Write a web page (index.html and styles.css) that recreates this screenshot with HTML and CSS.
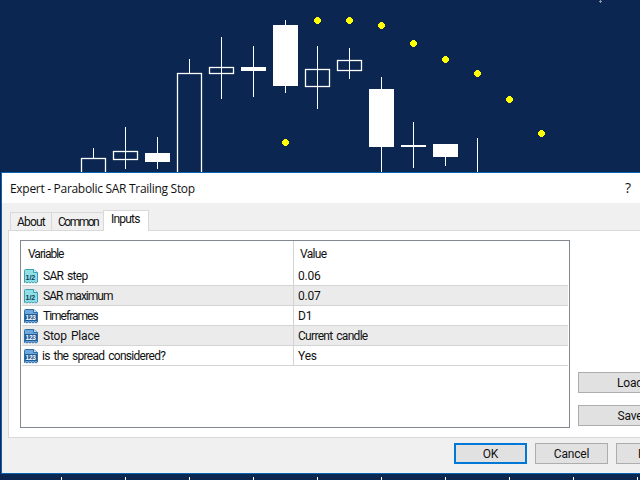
FILE: index.html
```html
<!DOCTYPE html>
<html lang="en">
<head>
	<meta charset="UTF-8">
	<title>Expert - Parabolic SAR Trailing Stop</title>
	<link rel="stylesheet" href="styles.css">
</head>
<body>
	<svg class="chart" width="640" height="480" viewBox="0 0 640 480" shape-rendering="crispEdges">
		<defs>
			<symbol id="dot" viewBox="0 0 7 7" overflow="visible"><path d="M2 0h3v1h1v1h1v3h-1v1h-1v1h-3v-1h-1v-1h-1v-3h1v-1h1z" fill="#ff0"/></symbol>
			<symbol id="icon-double" viewBox="0 0 16 16">
				<path d="M1.500 2.500a1 1 0 0 1 1-1h8l4 3v9.500l-1.500 1-1.500-1-1.500 1-1.500-1-1.500 1-1.500-1-1.500 1-1.500-1-1 .500z" fill="#8fdfe3" stroke="#3f9fb5"/>
				<path d="M10.500 1.500v3h4" fill="#d8f6f6" stroke="#3f9fb5"/>
			</symbol>
			<symbol id="icon-int" viewBox="0 0 16 16">
				<path d="M1.500 2.500a1 1 0 0 1 1-1h8l4 3v9.500l-1.500 1-1.500-1-1.500 1-1.500-1-1.500 1-1.500-1-1.500 1-1.500-1-1 .500z" fill="#6fa8dc" stroke="#2f6fa8"/>
				<path d="M10.500 1.500v3h4" fill="#cfe3f5" stroke="#2f6fa8"/>
				<rect x="2" y="6" width="12" height="7" fill="#1f5a94"/>
			</symbol>
		</defs>
		<!-- wicks -->
		<path class="wick" d="M93.500 148V158M125.500 127V169M157.500 137V169M189.500 59V73M221.500 37V99M253.500 46V97M285.500 20V93M317.500 46V109M349.500 48V79M381.500 77V172M413.500 122V168M445.500 157V166M477.500 138V172"/>
		<!-- hollow bodies -->
		<g class="hollow">
			<rect x="81.500" y="158.500" width="24" height="20"/>
			<rect x="113.500" y="151.500" width="24" height="8"/>
			<rect x="177.500" y="73.500" width="24" height="110"/>
			<rect x="209.500" y="67.500" width="24" height="6"/>
			<rect x="305.500" y="69.500" width="24" height="17"/>
			<rect x="337.500" y="60.500" width="24" height="10"/>
		</g>
		<!-- filled bodies -->
		<g class="filled">
			<rect x="145" y="153" width="25" height="9"/>
			<rect x="241" y="67" width="25" height="4"/>
			<rect x="273" y="25" width="25" height="61"/>
			<rect x="369" y="89" width="25" height="58"/>
			<rect x="401" y="145" width="25" height="2"/>
			<rect x="433" y="144" width="25" height="13"/>
		</g>
		<!-- parabolic sar -->
		<use href="#dot" x="282" y="139" width="7" height="7"/>
		<use href="#dot" x="314" y="17" width="7" height="7"/>
		<use href="#dot" x="346" y="17" width="7" height="7"/>
		<use href="#dot" x="378" y="22" width="7" height="7"/>
		<use href="#dot" x="410" y="40" width="7" height="7"/>
		<use href="#dot" x="442" y="56" width="7" height="7"/>
		<use href="#dot" x="474" y="70" width="7" height="7"/>
		<use href="#dot" x="506" y="96" width="7" height="7"/>
		<use href="#dot" x="538" y="130" width="7" height="7"/>
		<path class="mark" d="M600 0V3M599 1H602"/>
		<!-- time scale ticks -->
		<path class="wick" d="M61.500 477V480M125.500 477V480M189.500 477V480M253.500 477V480M317.500 477V480M381.500 477V480M445.500 477V480M509.500 477V480M573.500 477V480M637.500 477V480"/>
	</svg>

	<div class="dialog">
		<div class="title-bar">
			<span>Expert - Parabolic SAR Trailing Stop</span>
			<span class="help">?</span>
		</div>

		<div class="tabs">
			<div class="tab">About</div>
			<div class="tab">Common</div>
			<div class="tab active">Inputs</div>
		</div>

		<div class="panel">
			<div class="grid">
				<div class="row head">
					<div class="cell name tight">Variable</div>
					<div class="cell value snug">Value</div>
				</div>
				<div class="row">
					<div class="cell name snug"><svg class="icon" viewBox="0 0 16 16"><use href="#icon-double"/><text x="2.500" y="11.500" class="icon-text">1/2</text></svg>SAR step</div>
					<div class="cell value">0.06</div>
				</div>
				<div class="row alt">
					<div class="cell name tight"><svg class="icon" viewBox="0 0 16 16"><use href="#icon-double"/><text x="2.500" y="11.500" class="icon-text">1/2</text></svg>SAR maximum</div>
					<div class="cell value">0.07</div>
				</div>
				<div class="row">
					<div class="cell name tight"><svg class="icon" viewBox="0 0 16 16"><use href="#icon-int"/><text x="2.500" y="12" class="icon-text int">123</text></svg>Timeframes</div>
					<div class="cell value">D1</div>
				</div>
				<div class="row alt">
					<div class="cell name"><svg class="icon" viewBox="0 0 16 16"><use href="#icon-int"/><text x="2.500" y="12" class="icon-text int">123</text></svg>Stop Place</div>
					<div class="cell value snug">Current candle</div>
				</div>
				<div class="row">
					<div class="cell name snug spread"><svg class="icon" viewBox="0 0 16 16"><use href="#icon-int"/><text x="2.500" y="12" class="icon-text int">123</text></svg>is the spread considered?</div>
					<div class="cell value">Yes</div>
				</div>
			</div>
			<div class="side">
				<button class="btn wide">Load</button>
				<button class="btn wide">Save</button>
			</div>
		</div>

		<div class="footer">
			<button class="btn primary">OK</button>
			<button class="btn">Cancel</button>
			<button class="btn">Reset</button>
		</div>
	</div>
</body>
</html>
```

FILE: styles.css
```css
html, body{
	margin: 0;
	height: 100%;
	overflow: hidden;
	background-color: #0a2651;
}
.chart{
	position: absolute;
	left: 0;
	top: 0;
}
.wick{
	stroke: #fff;
	fill: none;
}
.hollow rect{
	fill: none;
	stroke: #fff;
	stroke-width: 1.300;
	shape-rendering: geometricPrecision;
}
.filled rect{
	fill: #fff;
}
.mark{
	stroke: #8c97aa;
	fill: none;
}
.icon-text{
	font: bold 7px "Liberation Sans", sans-serif;
	letter-spacing: 0;
	word-spacing: 0;
	fill: #0d3a5c;
}
.icon-text.int{
	font-size: 6.500px;
	letter-spacing: -0.2px;
	fill: #fff;
}

/* dialog window */
.dialog{
	position: absolute;
	left: 1px;
	top: 172px;
	width: 720px;
	height: 302px;
	box-sizing: border-box;
	border: 1px solid #0a64b4;
	background-color: #f0f0f0;
	font: 12px Roboto, "Liberation Sans", sans-serif;
	letter-spacing: -0.2px;
	word-spacing: 1.500px;
	color: #111;
	display: flex;
	flex-direction: column;
}
.title-bar{
	height: 30px;
	flex: none;
	background-color: #fff;
	display: flex;
	align-items: center;
	padding-left: 8px;
	position: relative;
	font-family: "Open Sans", sans-serif;
	letter-spacing: -0.3px;
	word-spacing: 0;
}
.help{
	position: absolute;
	left: 623px;
	top: 5px;
	font-size: 14px;
}

/* tabs */
.tabs{
	height: 27px;
	flex: none;
	display: flex;
	align-items: flex-end;
	padding-left: 8px;
}
.tab{
	height: 18px;
	box-sizing: border-box;
	border: 1px solid #d9d9d9;
	border-bottom: none;
	border-right: none;
	padding: 2px 0 0 6px;
	width: 41px;
	letter-spacing: -0.800px;
}
.tab + .tab{
	width: 52px;
	letter-spacing: -1.500px;
}
.tab.active{
	width: 46px;
	height: 21px;
	margin-bottom: -1px;
	border-right: 1px solid #d9d9d9;
	background-color: #fff;
	padding: 1px 0 0 7px;
	position: relative;
	z-index: 1;
	letter-spacing: -0.800px;
}

/* main panel */
.panel{
	height: 208px;
	flex: none;
	box-sizing: border-box;
	margin-left: 6px;
	border: 1px solid #d9d9d9;
	background-color: #fff;
	padding: 9px 11px;
	display: flex;
	gap: 8px;
}
.grid{
	width: 550px;
	height: 188px;
	flex: none;
	box-sizing: border-box;
	border: 1px solid #828790;
	padding-left: 1px;
	padding-right: 1px;
}
.row{
	height: 20px;
	box-sizing: border-box;
	border-bottom: 1px solid #d4d4d4;
	display: flex;
}
.row.head{
	height: 25px;
	border-bottom: none;
}
.row.alt{
	background-color: #ebebeb;
}
.cell{
	display: flex;
	align-items: center;
	box-sizing: border-box;
	white-space: pre;
}
.cell.name{
	width: 272px;
	border-right: 1px solid #d4d4d4;
	padding-left: 1px;
}
.cell.value{
	padding-left: 4px;
}
.head .cell.name{
	padding-left: 6px;
}
.head .cell.value{
	padding-left: 6px;
}
/* the labels run narrower than the font, some more than others */
.snug{
	letter-spacing: -0.700px;
}
.tight{
	letter-spacing: -1px;
}
.icon{
	width: 16px;
	height: 16px;
	margin-right: 4px;
	flex: none;
}
.spread .icon{
	margin-right: 3px;
}
.side{
	display: flex;
	flex-direction: column;
	justify-content: flex-end;
	gap: 12px;
	padding-bottom: 2px;
}

/* buttons */
.btn{
	width: 73px;
	height: 21px;
	box-sizing: border-box;
	border: 1px solid #adadad;
	background-color: #e1e1e1;
	font: inherit;
	letter-spacing: inherit;
	color: inherit;
	padding: 0;
}
.btn.wide{
	width: 104px;
}
.btn.primary{
	border: 2px solid #0078d7;
}
.footer{
	flex: 1;
	display: flex;
	gap: 8px;
	padding: 5px 0 0 452px;
}
```
